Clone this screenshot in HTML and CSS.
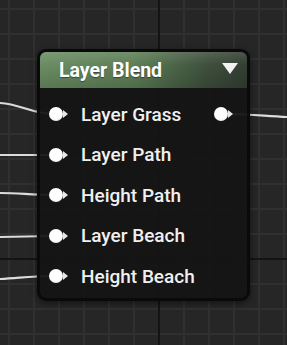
FILE: index.html
```html
<!DOCTYPE html>
<html lang="en">
<head>
  <meta charset="UTF-8" />
  <meta name="viewport" content="width=device-width, initial-scale=1.0" />
  <title>Layer Blend</title>
  <link rel="stylesheet" href="styles.css">
</head>
<body>

  <!-- ===== CANVAS ===== -->
  <div class="graph">

    <!-- wires -->
    <svg class="wires" width="287" height="345" viewBox="0 0 287 345">
      <path d="M0 103 C20 104 30 113 52 114" />
      <path d="M0 155 L52 155" />
      <path d="M0 193 C20 193 30 195 52 195" />
      <path d="M0 237 L52 236" />
      <path d="M0 279 C20 278 30 276 52 276" />
      <path d="M229 114 C250 114 265 116 287 117" />
    </svg>

    <!-- node -->
    <div class="node">
      <div class="node-head">
        <span>Layer Blend</span>
        <svg class="caret" width="16" height="11" viewBox="0 0 16 11"><path d="M0 0 L16 0 L8 11 Z" /></svg>
      </div>
      <div class="node-body">
        <div class="pin-row">
          <div class="pin-in"><i class="dot"></i><i class="arrow"></i><span>Layer Grass</span></div>
          <div class="pin-out"><i class="dot"></i><i class="arrow"></i></div>
        </div>
        <div class="pin-row">
          <div class="pin-in"><i class="dot"></i><i class="arrow"></i><span>Layer Path</span></div>
        </div>
        <div class="pin-row">
          <div class="pin-in"><i class="dot"></i><i class="arrow"></i><span>Height Path</span></div>
        </div>
        <div class="pin-row">
          <div class="pin-in"><i class="dot"></i><i class="arrow"></i><span>Layer Beach</span></div>
        </div>
        <div class="pin-row">
          <div class="pin-in"><i class="dot"></i><i class="arrow"></i><span>Height Beach</span></div>
        </div>
      </div>
    </div>

  </div>

</body>
</html>
```

FILE: styles.css
```css
/* ===== CANVAS & GRID ===== */
body{
  margin:0;padding:0;
  font-family:Roboto,"Liberation Sans",Arial,sans-serif;
  background:#262626;
  overflow:hidden;
}
.graph{
  position:relative;width:287px;height:345px;
  background-color:#262626;
  background-image:
    linear-gradient(90deg,transparent 158px,#141414 158px,#141414 160px,transparent 160px),
    linear-gradient(180deg,transparent 258px,#141414 258px,#141414 260px,transparent 260px),
    repeating-linear-gradient(90deg,transparent 0 8px,#303030 8px 10px,transparent 10px 25px),
    repeating-linear-gradient(180deg,transparent 0 8px,#303030 8px 10px,transparent 10px 25px);
}

.wires{position:absolute;left:0;top:0;}
.wires path{fill:none;stroke:#dcdcdc;stroke-width:2.2;}

/* ===== NODE ===== */
.node{
  position:absolute;left:37px;top:49px;
  width:207px;height:246px;
  border:3px solid #0a0a0a;border-radius:9px;
  background:rgba(20,20,20,.94);
  box-shadow:0 2px 6px rgba(0,0,0,.5);
  display:flex;flex-direction:column;
}
.node-head{
  height:36px;flex:none;
  display:flex;align-items:center;justify-content:space-between;
  padding:0 9px 0 19px;
  border-radius:6px 6px 0 0;
  background:
    linear-gradient(180deg,rgba(255,255,255,.12),rgba(255,255,255,0) 35%,rgba(0,0,0,.15)),
    linear-gradient(90deg,#6b8d63 0%,#5e7f57 45%,#3f513d 80%,#343e33 100%);
  color:#fff;font-size:19.5px;font-weight:700;
  text-shadow:0 1px 1px rgba(0,0,0,.4);
}
.caret{fill:#f2f2f2;margin-top:-3px;}

.node-body{padding-top:6px;display:flex;flex-direction:column;}
.pin-row{height:40.5px;display:flex;align-items:center;justify-content:space-between;}
.pin-in,.pin-out{display:flex;align-items:center;}
.pin-in{padding-left:9px;}
.pin-out{padding-right:14px;}

.dot{
  display:block;width:14px;height:14px;border-radius:50%;
  background:radial-gradient(circle at 45% 40%,#fff 55%,#d6d6d6 100%);
}
.arrow{
  display:block;width:0;height:0;margin-left:0;
  border-top:4px solid transparent;border-bottom:4px solid transparent;
  border-left:5px solid #e8e8e8;
}
.pin-in span{margin-left:13px;color:#f0f0f0;font-size:19px;font-weight:500;}
```
